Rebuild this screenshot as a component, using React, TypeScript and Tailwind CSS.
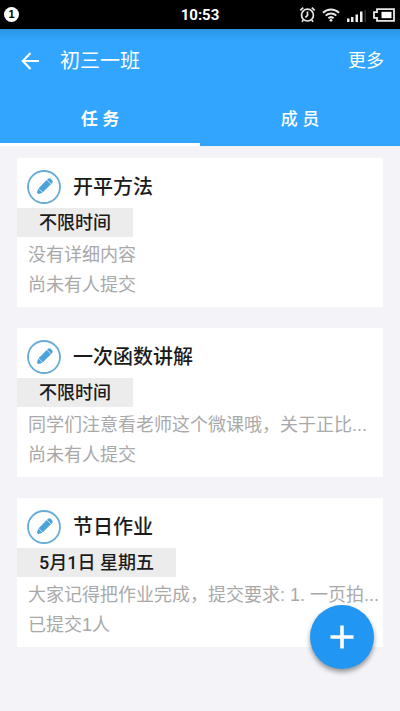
type Task = { title: string; time: string; detail: string; status: string };

const tasks: Task[] = [
  { title: '开平方法', time: '不限时间', detail: '没有详细内容', status: '尚未有人提交' },
  {
    title: '一次函数讲解',
    time: '不限时间',
    detail: '同学们注意看老师这个微课哦，关于正比...',
    status: '尚未有人提交',
  },
  {
    title: '节日作业',
    time: '5月1日 星期五',
    detail: '大家记得把作业完成，提交要求: 1. 一页拍...',
    status: '已提交1人',
  },
];

function StatusBar() {
  return (
    <div className="relative flex h-[29px] items-center justify-between bg-black pl-1 pr-[5px] text-white">
      <span className="flex size-[15px] items-center justify-center rounded-full bg-white text-[11px] leading-none font-bold text-black">
        1
      </span>
      <time className="absolute inset-x-0 text-center font-['Roboto'] text-[15px] leading-7 font-bold">
        10:53
      </time>
      <div className="flex items-center gap-[6px]">
        <svg width="17" height="17" viewBox="0 0 16 16" fill="none" stroke="#e8e8e8" strokeWidth="1.6" aria-hidden="true">
          <circle cx="8" cy="8.5" r="5.6" />
          <path d="M8 5.2v3.6L6 10.6M1.2 4.2 4 1.6M14.8 4.2 12 1.6M4 13.2l-1.2 1.6M12 13.2l1.2 1.6" />
        </svg>
        <svg width="18" height="14" viewBox="0 0 18 14" fill="none" stroke="#e8e8e8" strokeWidth="2" aria-hidden="true">
          <path d="M1 4.7C5.5.3 12.5.3 17 4.7M3.7 7.6c3-2.9 7.6-2.9 10.6 0M6.4 10.3c1.5-1.4 3.7-1.4 5.2 0" />
          <circle cx="9" cy="12.3" r="1.4" fill="#e8e8e8" stroke="none" />
        </svg>
        <svg width="21" height="14" viewBox="0 0 21 14" fill="#f0f0f0" aria-hidden="true">
          <path d="M1 10.5h2.5V14H1zM5 9h2.5v5H5zM9.5 6.5H12V14H9.5zM14 3.5h2.5V14H14z" />
          <path d="M18.5 2H20v12h-1.5z" fill="#333" />
        </svg>
        <svg width="22" height="14" viewBox="0 0 22 14" aria-hidden="true">
          <path d="M4 1.2h17v11.6H4V9.8H1V4.2h3z" fill="none" stroke="#e8e8e8" strokeWidth="1.8" />
          <path d="M8.5 3.8h10v6.4h-10z" fill="#fff" />
        </svg>
      </div>
    </div>
  );
}

function PencilBadge() {
  return (
    <svg width="34" height="34" viewBox="0 0 34 34" className="shrink-0" aria-hidden="true">
      <circle cx="17" cy="17" r="16" fill="#fff" stroke="#67acd8" strokeWidth="1.8" />
      <g transform="rotate(45 17 17)" fill="#4ba3dc">
        <path d="M14 9.6V8.5a2 2 0 0 1 2-2h2a2 2 0 0 1 2 2v1.1z" />
        <path d="M14 10.2h6v11.4h-6z" />
        <path d="M14 22h6l-1.6 3.2a1.5 1.5 0 0 1-2.8 0z" />
      </g>
    </svg>
  );
}

function TaskCard({ task }: { task: Task }) {
  return (
    <li className="bg-white pt-3 pb-[7px]">
      <div className="flex items-center gap-3 pl-[10px]">
        <PencilBadge />
        <h2 className="text-[20px] leading-[34px] font-medium text-[#1c1c1c]">{task.title}</h2>
      </div>
      <p className="mt-1 w-fit bg-[#ececec] px-[22px] font-['Roboto','Noto_Sans_CJK_SC',sans-serif] text-[18px] leading-[29px] font-medium text-[#1c1c1c]">
        {task.time}
      </p>
      <div className="mt-[3px] pl-[11px] text-[18px] leading-[30px] whitespace-nowrap text-[#a9a9a9]">
        <p>{task.detail}</p>
        <p>{task.status}</p>
      </div>
    </li>
  );
}

export default function App() {
  return (
    <div className="min-h-screen bg-[#f3f3f8] font-['Liberation_Sans','Noto_Sans_CJK_SC',sans-serif]">
      <StatusBar />
      <header className="bg-linear-to-b from-[#2b95e2] to-[#31a5ff] to-10% text-white">
        <div className="flex h-[63px] items-center pr-4 pl-[21px]">
          <button type="button" aria-label="返回">
            <svg width="19" height="18" viewBox="0 0 19 18" fill="none" stroke="currentColor" strokeWidth="2.2" aria-hidden="true">
              <path d="M18 9H2M9.5 1 1.8 9l7.7 8" />
            </svg>
          </button>
          <h1 className="ml-5 text-[20px] leading-8">初三一班</h1>
          <button type="button" className="ml-auto text-[18px] leading-8">
            更多
          </button>
        </div>
        <nav className="grid h-[54px] grid-cols-2">
          <button type="button" aria-current="page" className="border-b-3 border-white pt-1 text-[17px] leading-6 font-bold">
            任 务
          </button>
          <button type="button" className="border-b-3 border-transparent pt-1 text-[17px] leading-6 font-medium">
            成 员
          </button>
        </nav>
      </header>
      <main>
        <ul className="flex flex-col gap-[21px] px-[17px] pt-3 pb-16">
          {tasks.map((task) => (
            <TaskCard key={task.title} task={task} />
          ))}
        </ul>
      </main>
      <button
        type="button"
        aria-label="添加任务"
        className="fixed right-[26px] bottom-[42px] flex size-16 items-center justify-center rounded-full bg-[#2196f3] text-white shadow-[0_3px_5px_rgba(0,0,0,0.4)]"
      >
        <svg width="24" height="24" viewBox="0 0 24 24" stroke="currentColor" strokeWidth="3.6" aria-hidden="true">
          <path d="M12 .5v23M.5 12h23" />
        </svg>
      </button>
    </div>
  );
}
